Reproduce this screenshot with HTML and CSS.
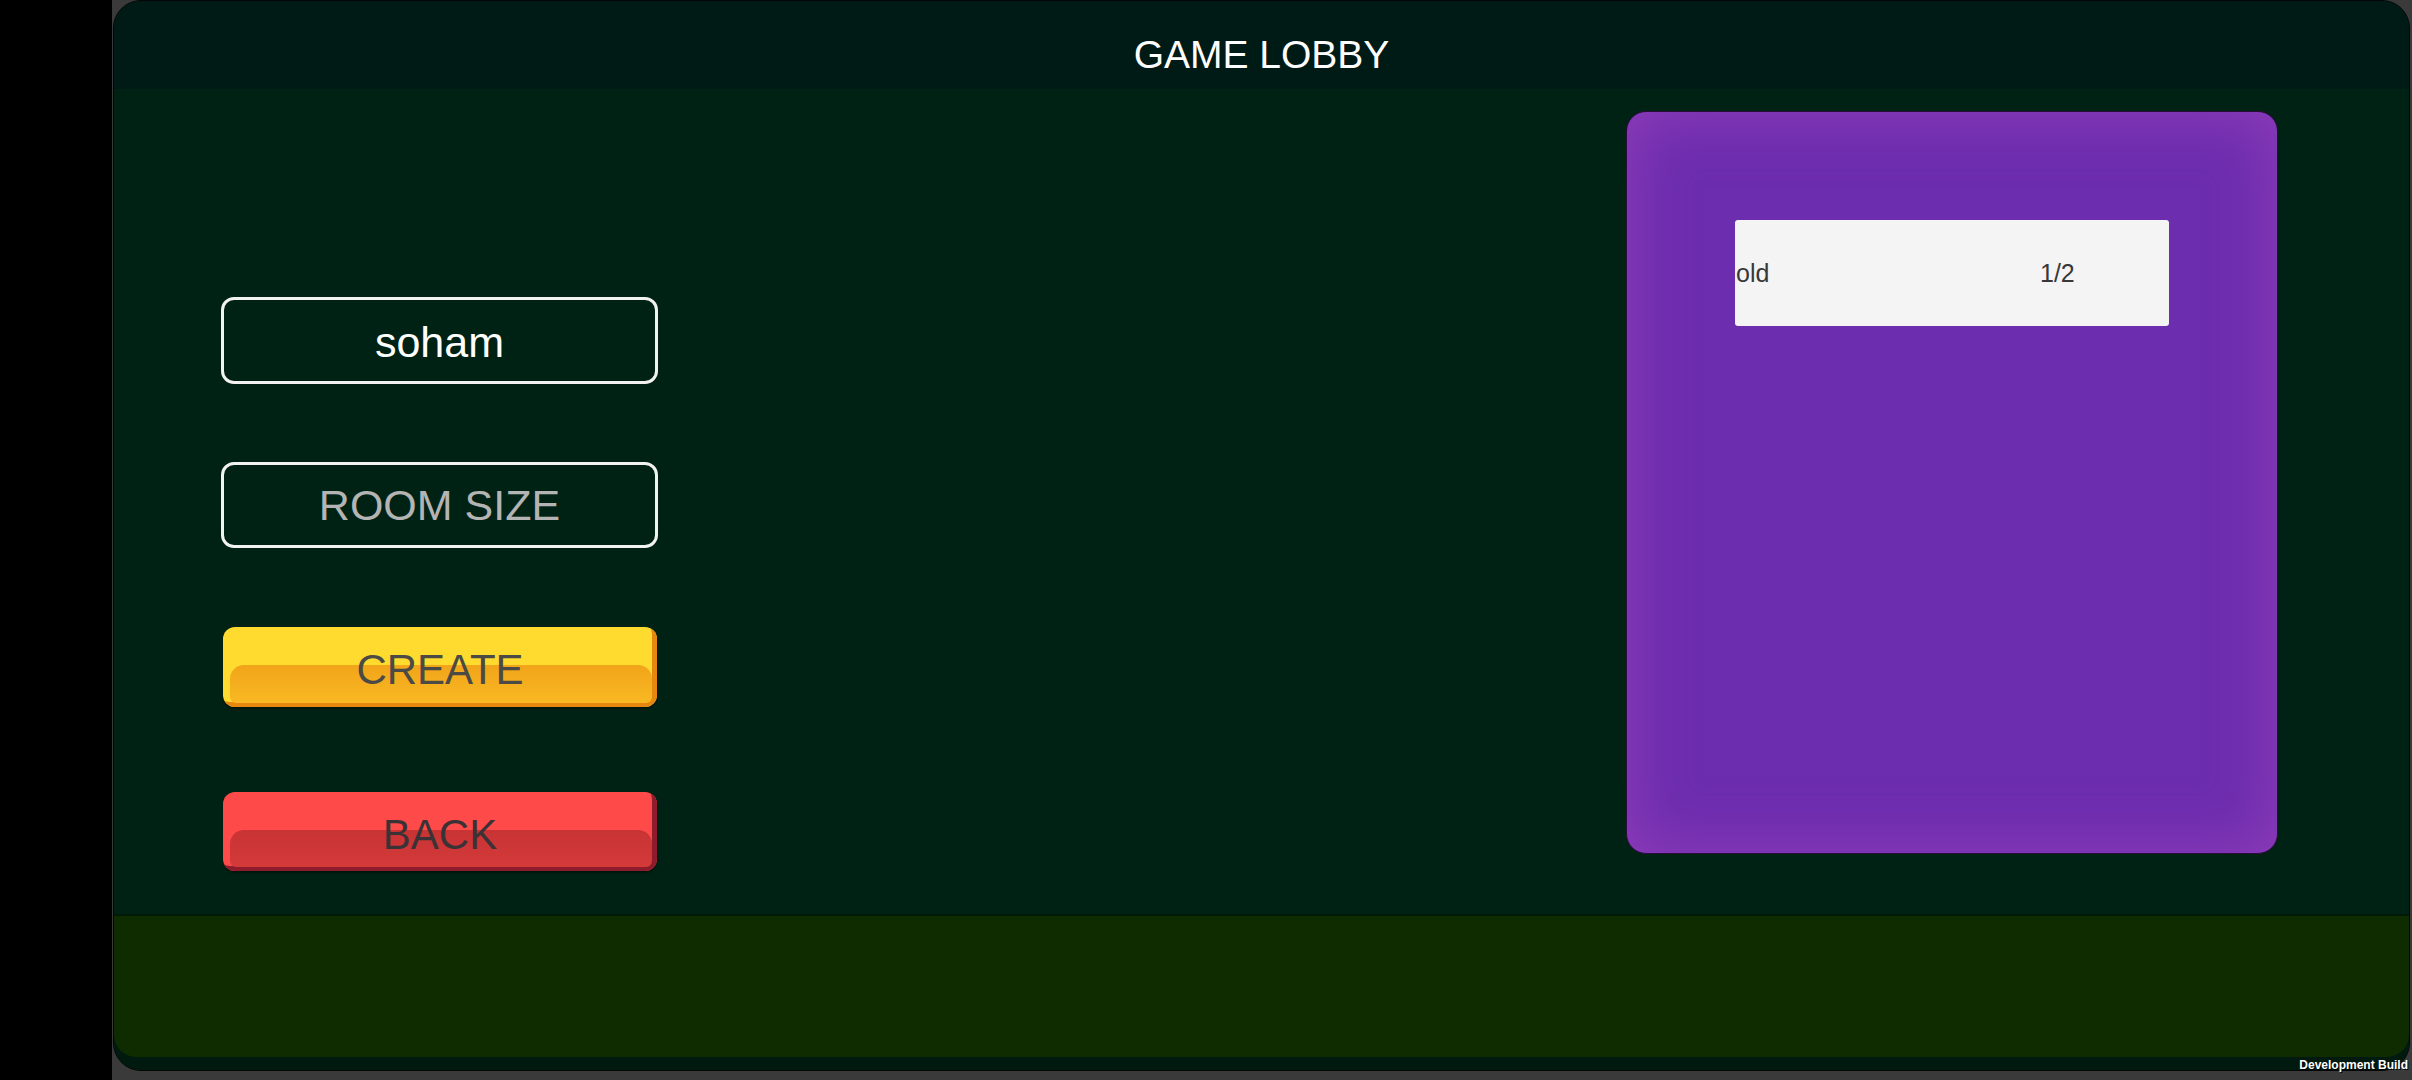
FILE: index.html
```html
<!DOCTYPE html>
<html lang="en">
<head>
<meta charset="utf-8">
<title>Game Lobby</title>
<link rel="stylesheet" href="styles.css">
</head>
<body>
<div class="strip"></div>
<div class="device">
  <div class="panel">
    <header class="header"><span class="title">GAME LOBBY</span></header>
    <main class="content">
      <div class="form">
        <div class="field field-name">soham</div>
        <div class="field field-size">ROOM SIZE</div>
        <button class="btn btn-create"><span>CREATE</span></button>
        <button class="btn btn-back"><span>BACK</span></button>
      </div>
      <section class="rooms">
        <div class="room">
          <span class="room-name">old</span>
          <span class="room-count">1/2</span>
        </div>
      </section>
    </main>
    <footer class="footer"><div class="footer-inner"></div></footer>
  </div>
  <div class="devbuild">Development Build</div>
</div>
</body>
</html>
```
FILE: styles.css
```css
* { box-sizing: border-box; }
html, body { margin: 0; padding: 0; }
body {
  width: 2412px;
  height: 1080px;
  background: #000;
  display: flex;
  overflow: hidden;
  font-family: "Liberation Sans", Arial, sans-serif;
}
.strip { width: 112px; flex: none; background: #000; }
.device {
  position: relative;
  flex: 1;
  background: #3a3a3a;
  padding: 0 2px 9px 1px;
}
.panel {
  height: 1071px;
  border: 1px solid #050505;
  border-radius: 28px;
  overflow: hidden;
  display: flex;
  flex-direction: column;
  background: #002214;
}
.header {
  height: 88px;
  flex: none;
  background: #001a16;
  padding-top: 34px;
  text-align: center;
}
.title {
  display: inline-block;
  color: #fff;
  font-size: 39px;
  line-height: 39px;
}
.content {
  height: 825px;
  flex: none;
  background: #002214;
  display: flex;
  justify-content: space-between;
  padding: 0 131px 0 107px;
}
.form {
  width: 437px;
  padding-top: 208px;
  display: grid;
  grid-template-rows: repeat(4, 165px);
  align-items: start;
}
.field {
  height: 87px;
  border: 3px solid #f2f2f2;
  border-radius: 13px;
  display: flex;
  align-items: center;
  justify-content: center;
  font-size: 43px;
}
.field-name { color: #fff; padding-top: 3px; }
.field-size { height: 86px; color: #b4b4b4; }
.btn {
  position: relative;
  height: 80px;
  margin: 0 0 0 2px;
  width: 434px;
  border: none;
  border-radius: 12px;
  padding: 0;
  font-family: "Liberation Sans", Arial, sans-serif;
  font-size: 42px;
  overflow: hidden;
}
.btn::before {
  content: "";
  position: absolute;
  left: 7px;
  right: 5px;
  top: 38px;
  bottom: 4px;
  border-radius: 14px 14px 6px 6px;
}
.btn span { position: relative; display: block; line-height: 80px; padding-top: 3px; }
.btn-create {
  background: #ffdb30;
  color: #4b4a45;
  box-shadow: inset -5px -5px 0 #e6870f, 0 2px 2px rgba(0,0,0,0.4);
}
.btn-create::before { background: linear-gradient(#f2a41a, #f8b923); }
.btn-back {
  height: 79px;
  background: #ff4a4a;
  color: #3b3236;
  box-shadow: inset -5px -5px 0 #8e1c2c, 0 2px 2px rgba(0,0,0,0.4);
}
.btn-back::before { background: linear-gradient(#c83334, #d43a3a); }
.rooms {
  width: 652px;
  height: 743px;
  margin-top: 22px;
  border-radius: 20px;
  background: #6c2dae;
  border: 1px solid #2a0d3a;
  box-shadow: inset 0 0 60px 4px rgba(142, 60, 184, 1);
  padding: 108px 0 0 108px;
}
.room {
  width: 434px;
  height: 106px;
  background: #f4f4f4;
  border-radius: 3px;
  display: flex;
  align-items: center;
  color: #383838;
  font-size: 25px;
}
.room-name { width: 305px; padding-left: 1px; }
.footer {
  height: 156px;
  flex: none;
  background: #001a0f;
  border-top: 2px solid #001a08;
  padding-bottom: 13px;
}
.footer-inner {
  height: 100%;
  background: #0e2c00;
  border-radius: 0 0 22px 22px;
}
.devbuild {
  position: absolute;
  right: 4px;
  bottom: 8px;
  color: #fff;
  font-family: "Liberation Sans", sans-serif;
  font-weight: bold;
  font-size: 12px;
  text-shadow: 1px 1px 0 #000;
}
```
